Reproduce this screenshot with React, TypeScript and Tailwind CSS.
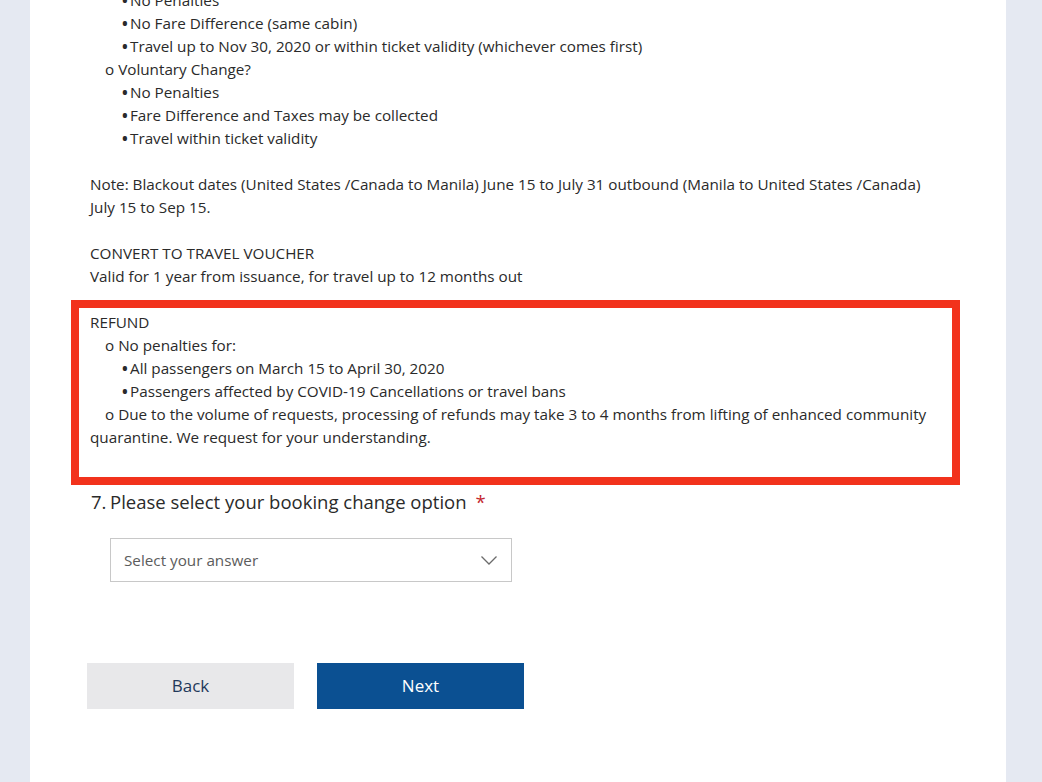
const font = { fontFamily: '"Open Sans", "DejaVu Sans", sans-serif' }

function Bullet({ children }: { children: React.ReactNode }) {
  return (
    <div className="flex pl-[32px]">
      <span className="w-[8px] shrink-0 font-bold">•</span>
      <span>{children}</span>
    </div>
  )
}

function Sub({ children }: { children: React.ReactNode }) {
  return <div className="pl-[15px]">o {children}</div>
}

export default function App() {
  return (
    <div
      className="flex h-[782px] w-[1042px] overflow-hidden bg-[#e5e9f2] pl-[30px] pr-[36px]"
      style={font}
    >
      <div className="flex-1 bg-white">
        <div className="mt-[-11px] w-[910px] pl-[60px] text-[15.25px] leading-[23px] text-[#2a2a2a]">
          <Bullet>No Penalties</Bullet>
          <Bullet>No Fare Difference (same cabin)</Bullet>
          <Bullet>Travel up to Nov 30, 2020 or within ticket validity (whichever comes first)</Bullet>
          <Sub>Voluntary Change?</Sub>
          <Bullet>No Penalties</Bullet>
          <Bullet>Fare Difference and Taxes may be collected</Bullet>
          <Bullet>Travel within ticket validity</Bullet>
          <div className="h-[23px]" />
          <p>
            Note: Blackout dates (United States /Canada to Manila) June 15 to July 31 outbound
            (Manila to United States /Canada) July 15 to Sep 15.
          </p>
          <div className="h-[23px]" />
          <p>CONVERT TO TRAVEL VOUCHER</p>
          <p>Valid for 1 year from issuance, for travel up to 12 months out</p>

          <div className="ml-[-19px] mt-[12px] w-[889px] border-[8px] border-[#f2321c] pb-[28px] pl-[11px] pr-[8px] pt-[3px]">
            <p>REFUND</p>
            <Sub>No penalties for:</Sub>
            <Bullet>All passengers on March 15 to April 30, 2020</Bullet>
            <Bullet>Passengers affected by COVID-19 Cancellations or travel bans</Bullet>
            <p className="indent-[15px]">
              o Due to the volume of requests, processing of refunds may take 3 to 4 months from
              lifting of enhanced community quarantine. We request for your understanding.
            </p>
          </div>
        </div>

        <div className="ml-[61px] mt-[4px] flex text-[18.5px] leading-[26px] text-[#2a2a2a]">
          <span className="w-[19px]">7.</span>
          <span>Please select your booking change option</span>
          <span className="ml-[9px] text-[#c4262e]">*</span>
        </div>

        <div className="ml-[80px] mt-[23px] flex h-[44px] w-[402px] items-center justify-between border border-[#c8c8c8] pl-[13px] pr-[14px] text-[15.25px] text-[#5c5c5c]">
          <span>Select your answer</span>
          <svg width="16" height="9" viewBox="0 0 16 9" fill="none" stroke="#6b6b6b" strokeWidth="1.3">
            <polyline points="0.5,0.5 8,8 15.5,0.5" />
          </svg>
        </div>

        <div className="ml-[57px] mt-[81px] flex gap-[23px] text-[17px]">
          <button className="h-[46px] w-[207px] bg-[#e8e8ea] text-[#23395b]">Back</button>
          <button className="h-[46px] w-[207px] bg-[#0b5092] text-white">Next</button>
        </div>
      </div>
    </div>
  )
}
